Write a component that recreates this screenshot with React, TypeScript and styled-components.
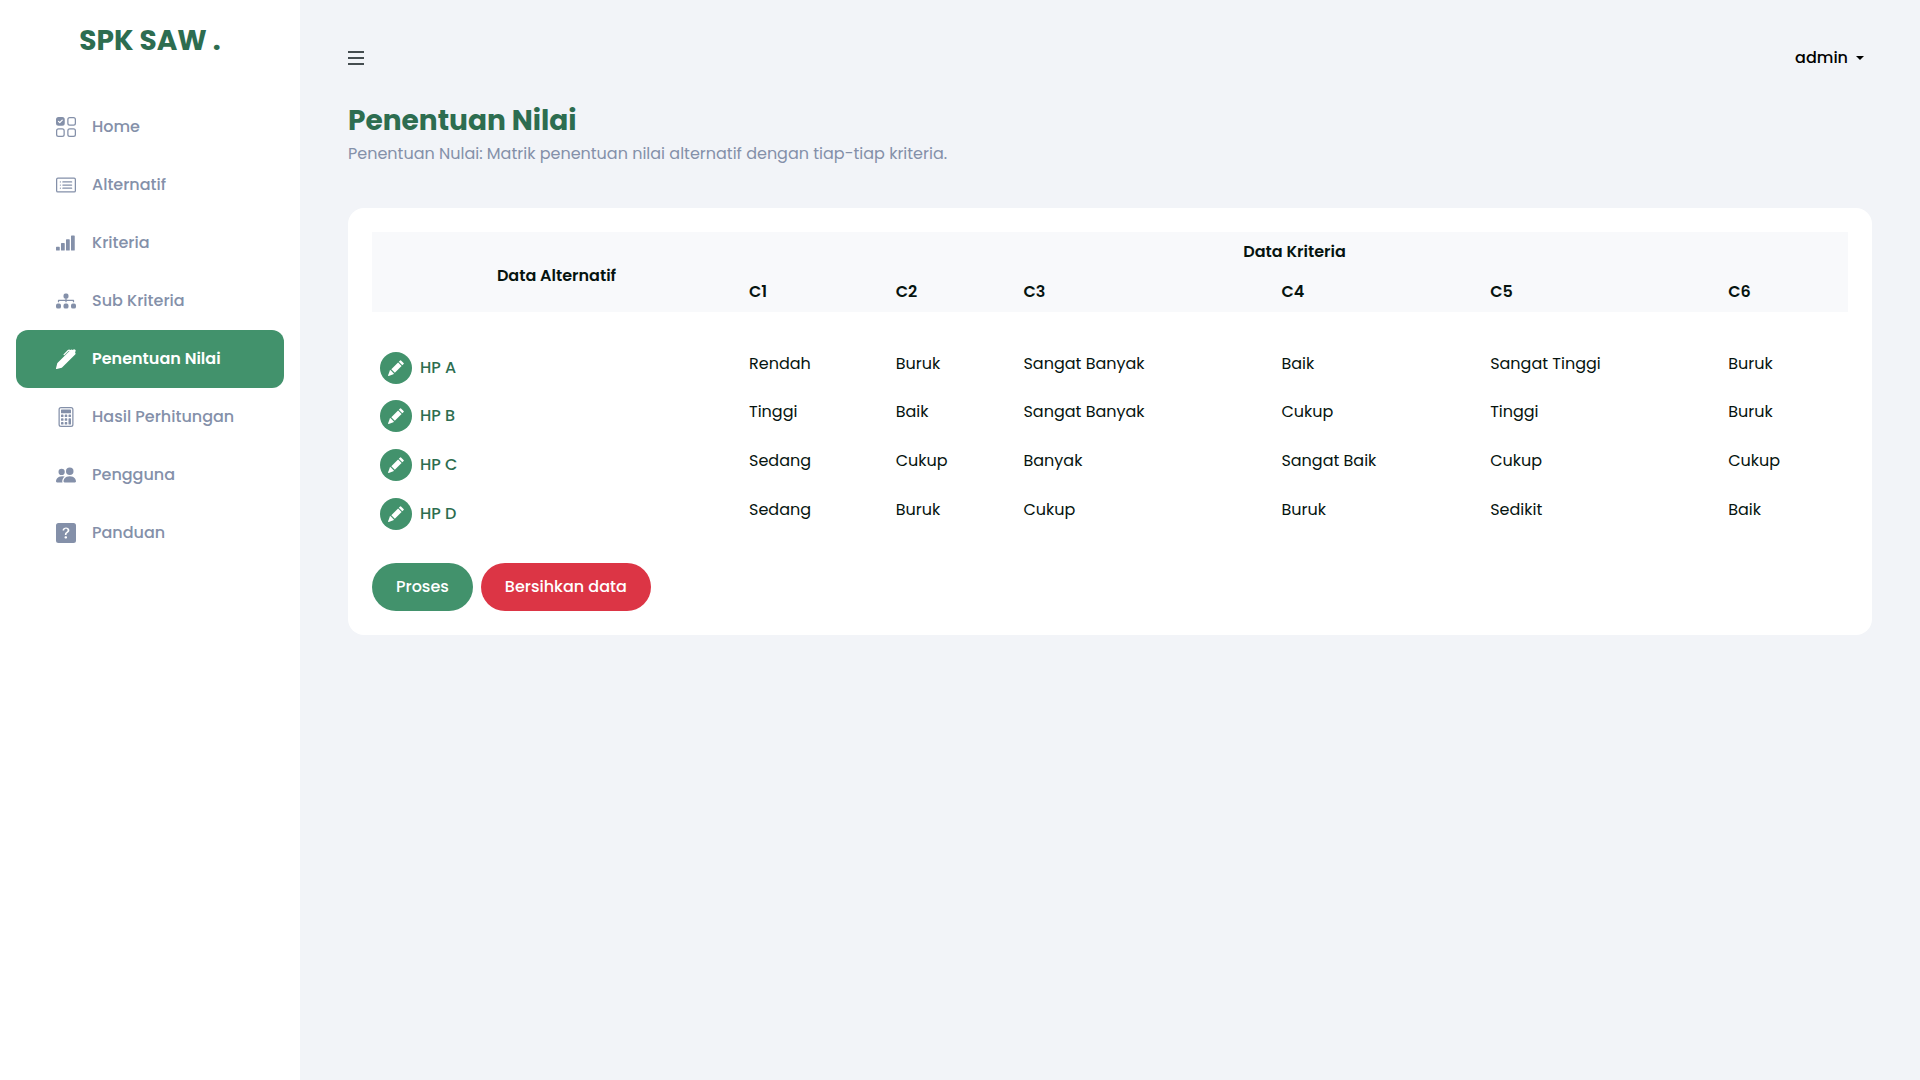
import React from 'react';
import styled, { createGlobalStyle } from 'styled-components';
import type { IconType } from 'react-icons';
import {
  BsCalculator,
  BsCardList,
  BsDiagram3Fill,
  BsPenFill,
  BsPeopleFill,
  BsQuestionSquareFill,
  BsReception4,
  BsUiChecksGrid,
} from 'react-icons/bs';

const green = '#42926c';
const darkGreen = '#2d6d50';
const muted = '#8490a9';
const ink = '#06140f';

const GlobalStyle = createGlobalStyle`
  *, *::before, *::after { box-sizing: border-box; }
  body {
    margin: 0;
    background: #f2f4f8;
    color: ${ink};
    font: 400 16px/24px Poppins, Inter, "Open Sans", sans-serif;
  }
  button { font: inherit; cursor: pointer; }
  a { text-decoration: none; }
`;

const Page = styled.div`
  display: flex;
  min-height: 100vh;
`;

const Sidebar = styled.aside`
  flex: 0 0 300px;
  padding: 20px 16px;
  background: #fff;
`;

const Brand = styled.a`
  display: block;
  margin-bottom: 36px;
  color: ${darkGreen};
  font-size: 28px;
  font-weight: 700;
  line-height: 42px;
  text-align: center;
`;

const NavLink = styled.a<{ $active: boolean }>`
  display: flex;
  align-items: center;
  gap: 16px;
  height: 58px;
  padding: 0 40px;
  border-radius: 12px;
  background: ${({ $active }) => ($active ? green : 'transparent')};
  color: ${({ $active }) => ($active ? '#fff' : muted)};
  font-weight: ${({ $active }) => ($active ? 600 : 500)};
  line-height: 24px;

  svg {
    flex: none;
    width: 20px;
    height: 20px;
  }
`;

const Main = styled.main`
  flex: 1;
  min-width: 0;
  padding: 36px 48px;
`;

const Topbar = styled.header`
  display: flex;
  align-items: center;
  justify-content: space-between;
  height: 43px;
  margin-bottom: 24px;
`;

const MenuButton = styled.button`
  display: flex;
  padding: 0;
  border: 0;
  background: none;
  color: #454d50;
`;

const UserButton = styled.button`
  display: flex;
  align-items: center;
  gap: 8px;
  padding: 8px;
  border: 0;
  background: none;
  color: #000;
  font-weight: 500;
`;

const Caret = styled.span`
  border: 4px solid transparent;
  border-top-color: currentColor;
  border-bottom: 0;
`;

const Title = styled.h1`
  margin: 0 0 4px;
  color: ${darkGreen};
  font-size: 28px;
  font-weight: 700;
  line-height: 35px;
`;

const Subtitle = styled.p`
  margin: 0 0 42px;
  color: ${muted};
`;

const Card = styled.section`
  padding: 24px;
  border-radius: 16px;
  background: #fff;
`;

const Table = styled.table`
  width: 100%;
  border-collapse: collapse;
`;

const HeadCell = styled.th<{ $centered?: boolean }>`
  padding: 8px;
  background: #f8f9fb;
  font-weight: 600;
  text-align: ${({ $centered }) => ($centered ? 'center' : 'left')};

  &[rowspan] {
    width: 25%;
    padding-top: 16px;
  }
`;

const Row = styled.tr`
  height: 49px;

  &:first-child > * {
    padding-top: 40px;
  }
`;

const Cell = styled.td`
  padding: 8px;
  vertical-align: top;
`;

const NameCell = styled.th`
  padding: 8px;
  color: ${darkGreen};
  font-weight: 500;
  text-align: left;
  vertical-align: top;
`;

const NameGroup = styled.div`
  display: flex;
  align-items: center;
  gap: 8px;
`;

const EditButton = styled.button`
  display: grid;
  place-items: center;
  width: 32px;
  height: 32px;
  padding: 0;
  border: 0;
  border-radius: 50%;
  background: ${green};
  color: #fff;
`;

const Actions = styled.div`
  display: flex;
  gap: 8px;
  margin-top: 24px;
`;

const ActionButton = styled.button<{ $danger?: boolean }>`
  padding: 12px 24px;
  border: 0;
  border-radius: 24px;
  background: ${({ $danger }) => ($danger ? '#dc3545' : green)};
  color: #fff;
  font-weight: 500;
`;

const navItems: { label: string; icon: IconType; active?: boolean }[] = [
  { label: 'Home', icon: BsUiChecksGrid },
  { label: 'Alternatif', icon: BsCardList },
  { label: 'Kriteria', icon: BsReception4 },
  { label: 'Sub Kriteria', icon: BsDiagram3Fill },
  { label: 'Penentuan Nilai', icon: BsPenFill, active: true },
  { label: 'Hasil Perhitungan', icon: BsCalculator },
  { label: 'Pengguna', icon: BsPeopleFill },
  { label: 'Panduan', icon: BsQuestionSquareFill },
];

const criteria = ['C1', 'C2', 'C3', 'C4', 'C5', 'C6'];

const alternatives = [
  { name: 'HP A', values: ['Rendah', 'Buruk', 'Sangat Banyak', 'Baik', 'Sangat Tinggi', 'Buruk'] },
  { name: 'HP B', values: ['Tinggi', 'Baik', 'Sangat Banyak', 'Cukup', 'Tinggi', 'Buruk'] },
  { name: 'HP C', values: ['Sedang', 'Cukup', 'Banyak', 'Sangat Baik', 'Cukup', 'Cukup'] },
  { name: 'HP D', values: ['Sedang', 'Buruk', 'Cukup', 'Buruk', 'Sedikit', 'Baik'] },
];

/* Pencil in three parts: eraser, body and tip. */
function PencilIcon() {
  return (
    <svg width="16" height="16" viewBox="0 0 16 16" fill="currentColor" aria-hidden>
      <path d="M12.1.4a.6.6 0 0 1 .9 0l2.6 2.6a.6.6 0 0 1 0 .9L14.3 5.200 10.800 1.700z" />
      <path d="M10.100 2.400l3.500 3.500-6.800 6.900-3.500-3.600z" />
      <path d="M2.500 10.100l3.500 3.600-.6.500-4.700 1.700a.5.5 0 0 1-.6-.6l1.800-4.700z" />
    </svg>
  );
}

export default function App() {
  return (
    <>
      <GlobalStyle />
      <Page>
        <Sidebar>
          <Brand href="#">SPK SAW .</Brand>
          <nav>
            {navItems.map(({ label, icon: Icon, active = false }) => (
              <NavLink key={label} href="#" $active={active} aria-current={active ? 'page' : undefined}>
                <Icon aria-hidden />
                {label}
              </NavLink>
            ))}
          </nav>
        </Sidebar>
        <Main>
          <Topbar>
            <MenuButton type="button" aria-label="Menu">
              <svg width="16" height="14" viewBox="0 0 16 14" fill="currentColor" aria-hidden>
                <path d="M0 0h16v2H0zM0 6h16v2H0zM0 12h16v2H0z" />
              </svg>
            </MenuButton>
            <UserButton type="button">
              admin
              <Caret />
            </UserButton>
          </Topbar>
          <Title>Penentuan Nilai</Title>
          <Subtitle>Penentuan Nulai: Matrik penentuan nilai alternatif dengan tiap-tiap kriteria.</Subtitle>
          <Card>
            <Table>
              <thead>
                <tr>
                  <HeadCell rowSpan={2} $centered>Data Alternatif</HeadCell>
                  <HeadCell colSpan={criteria.length} $centered>Data Kriteria</HeadCell>
                </tr>
                <tr>
                  {criteria.map((name) => (
                    <HeadCell key={name}>{name}</HeadCell>
                  ))}
                </tr>
              </thead>
              <tbody>
                {alternatives.map(({ name, values }) => (
                  <Row key={name}>
                    <NameCell scope="row">
                      <NameGroup>
                        <EditButton type="button" aria-label={`Edit ${name}`}>
                          <PencilIcon />
                        </EditButton>
                        {name}
                      </NameGroup>
                    </NameCell>
                    {values.map((value, i) => (
                      <Cell key={criteria[i]}>{value}</Cell>
                    ))}
                  </Row>
                ))}
              </tbody>
            </Table>
            <Actions>
              <ActionButton type="button">Proses</ActionButton>
              <ActionButton type="button" $danger>Bersihkan data</ActionButton>
            </Actions>
          </Card>
        </Main>
      </Page>
    </>
  );
}
